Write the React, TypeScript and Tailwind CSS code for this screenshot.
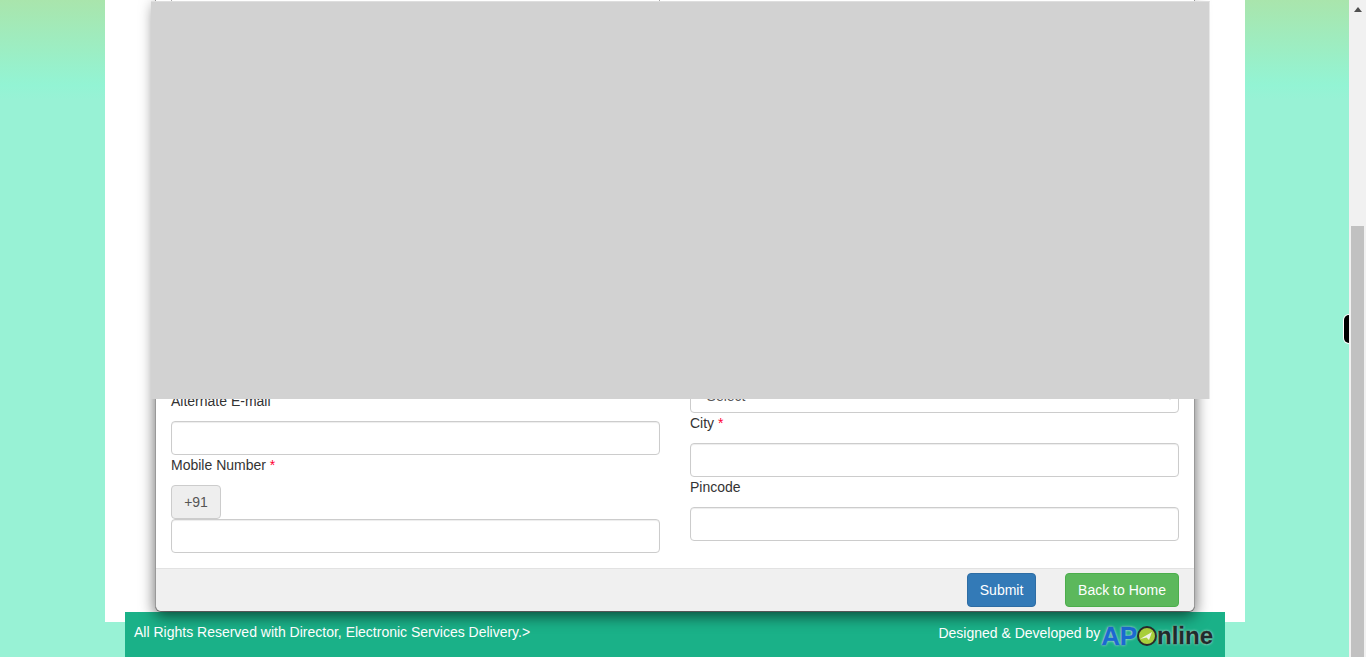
function Req() {
  return <span className="text-[#ff0033]"> *</span>
}

function Label({ text, required }: { text: string; required?: boolean }) {
  return (
    <label className="block h-[20px] mb-[10px] text-sm leading-[20px] text-[#333]">
      {text}
      {required && <Req />}
    </label>
  )
}

function Input() {
  return (
    <input
      type="text"
      className="block w-full h-[34px] rounded-[4px] border border-[#ccc] bg-white shadow-[inset_0_1px_1px_rgba(0,0,0,0.075)]"
    />
  )
}

function Logo() {
  return (
    <div className="flex items-center font-bold leading-none mt-[1px] [text-shadow:0_0_3px_rgba(225,235,230,0.9),0_0_1px_rgba(225,235,230,0.9)]">
      <span className="text-[26px] text-[#1a6ad0] tracking-[-0.2px] [-webkit-text-stroke:0.4px_#1a6ad0]">AP</span>
      <svg width="20" height="20" viewBox="0 0 20 20" className="shrink-0">
        <circle cx="10" cy="10" r="9" fill="#a9cf3c" stroke="#2b2b2b" strokeWidth="2" />
        <path d="M3 13 L15 6 L12 14 L9.5 11.5 Z" fill="#eef2e6" />
      </svg>
      <span className="text-[24px] text-[#1f2b2b] [-webkit-text-stroke:0.3px_#1f2b2b]">nline</span>
    </div>
  )
}

export default function App() {
  return (
    <div className="flex h-[657px] w-full overflow-hidden font-['Liberation_Sans',Arial,sans-serif] text-sm text-[#333]">
      <main className="relative flex-1 h-full overflow-hidden bg-[linear-gradient(to_bottom,#a9e5ac_0,#93f4d4_85px,#98f2d5_100px)]">
        <div className="ml-[105px] w-[1140px] h-[622px] bg-white px-[50px] pb-[11px]">
          {/* Modal */}
          <div className="relative z-10 flex flex-col h-[611px] rounded-b-[6px] bg-white shadow-[0_5px_15px_rgba(0,0,0,0.6),0_1px_0_#999] border-x border-[#999]">
            <div className="flex-1 flex flex-col justify-between overflow-hidden px-[15px] pb-[15px]">
              <div className="grid grid-cols-[488px_520px] h-[2px] border-b border-[#ddd]">
                <div className="border-l border-[#aaa]" />
                <div className="border-l border-[#aaa]" />
              </div>

              <div className="grid grid-cols-2 gap-x-[30px] items-end">
                <div>
                  <Label text="Alternate E-mail" />
                  <Input />
                  <Label text="Mobile Number" required />
                  <div className="w-[50px] h-[34px] flex items-center justify-center rounded-[4px] border border-[#ccc] bg-[#eee] text-[#555]">
                    +91
                  </div>
                  <Input />
                </div>

                <div className="pb-[12px]">
                  <select className="block w-full h-[34px] px-[3px] rounded-[4px] border border-[#ccc] bg-white text-[#555] text-sm">
                    <option>- Select -</option>
                  </select>
                  <Label text="City" required />
                  <Input />
                  <Label text="Pincode" />
                  <Input />
                </div>
              </div>
            </div>

            {/* Modal footer */}
            <div className="flex items-center justify-end gap-[29px] h-[43px] px-[15px] bg-[#f0f0f0] border-t border-[#e2e2e2] rounded-b-[6px]">
              <button className="w-[69px] h-[34px] rounded-[4px] border border-[#2e6da4] bg-[#337ab7] text-white text-sm">
                Submit
              </button>
              <button className="h-[34px] px-[12px] rounded-[4px] border border-[#4cae4c] bg-[#5cb85c] text-white text-sm">
                Back to Home
              </button>
            </div>
          </div>
        </div>

        {/* Site footer */}
        <footer className="relative -mt-[10px] ml-[125px] w-[1100px] h-[45px] flex justify-between bg-[#1ab188] text-white text-sm pl-[9px] pr-[12px]">
          <div className="pt-[10px] leading-[20px]">All Rights Reserved with Director, Electronic Services Delivery.&gt;</div>
          <div className="flex items-start pt-[10px]">
            <span className="leading-[22px] mr-[1px]">Designed &amp; Developed by</span>
            <Logo />
          </div>
        </footer>

        {/* Grey block over the modal */}
        <div className="absolute z-20 left-[151px] top-px w-[1059px] h-[398px] bg-[#d2d2d2] border-t border-r border-t-[#dedede] border-r-[#e8e8e8]" />

        {/* Black tab on the right edge */}
        <div className="absolute right-0 top-[315px] w-[5px] h-[28px] bg-black rounded-l-[6px] shadow-[0_0_0_1px_#fff]" />
      </main>

      {/* Scrollbar */}
      <aside className="flex flex-col w-[17px] h-full bg-[#f1f1f1]">
        <div className="h-[226px] flex justify-center pt-[7px]">
          <svg width="8" height="5" viewBox="0 0 8 5">
            <path d="M4 0 L8 5 L0 5 Z" fill="#505050" />
          </svg>
        </div>
        <div className="flex-1 ml-[2px] w-[13px] bg-[#c1c1c1]" />
      </aside>
    </div>
  )
}
